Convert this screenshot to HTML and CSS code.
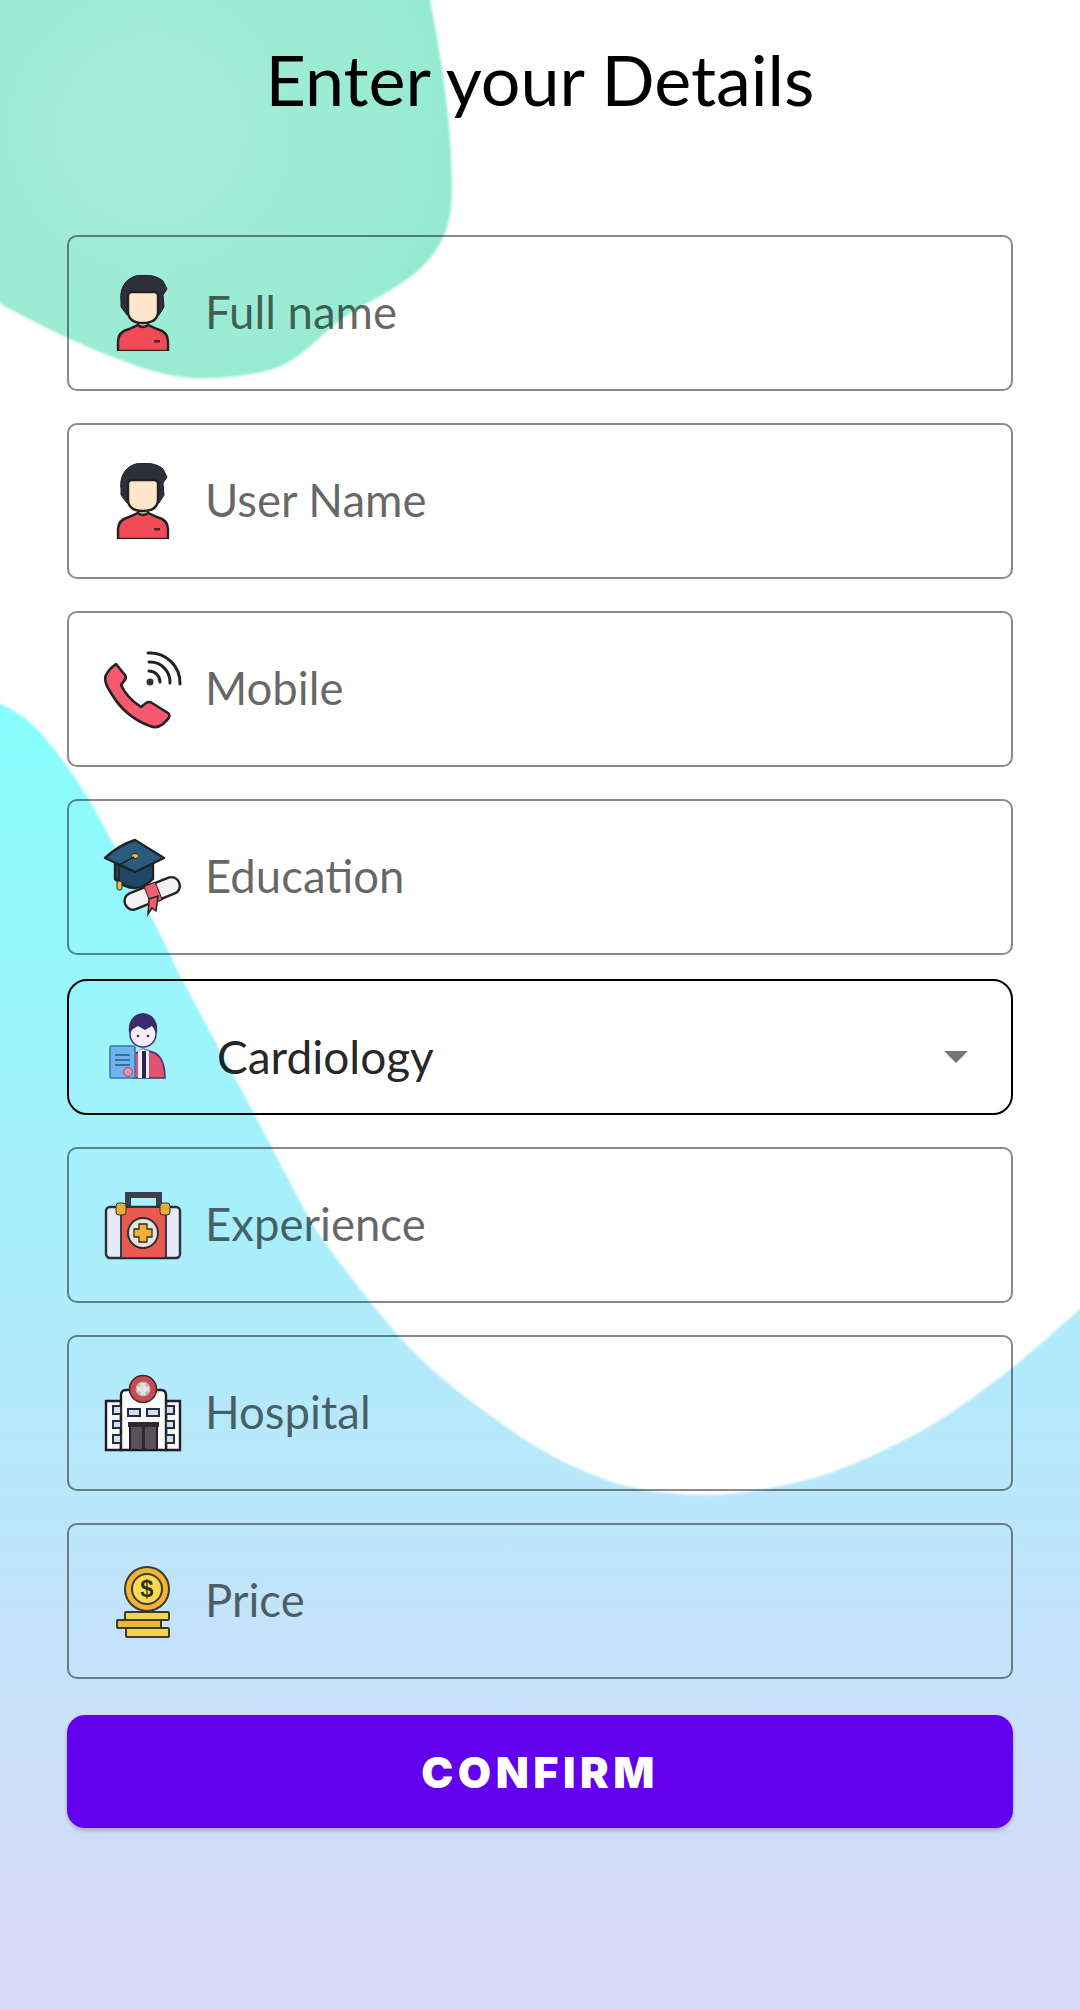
FILE: index.html
```html
<!DOCTYPE html>
<html lang="en">
<head>
<meta charset="utf-8">
<title>Enter your Details</title>
<link rel="stylesheet" href="styles.css">
</head>
<body>
<div class="page">
  <svg class="backdrop" viewBox="0 0 1080 2010" aria-hidden="true">
    <defs>
      <linearGradient id="sky" x1="0" y1="0" x2="0" y2="1">
        <stop offset="0.33" stop-color="#84ffff"/>
        <stop offset="1" stop-color="#dcd8f8"/>
      </linearGradient>
      <radialGradient id="mint" gradientUnits="userSpaceOnUse" cx="150" cy="130" r="300">
        <stop offset="0" stop-color="#a9edd9"/>
        <stop offset="1" stop-color="#95ebd1"/>
      </radialGradient>
      <filter id="soft"><feGaussianBlur stdDeviation="1.2"/></filter>
    </defs>
    <rect width="1080" height="2010" fill="url(#sky)"/>
    <path filter="url(#soft)" fill="#fff" d="M-5 -5H1085V1305C1056 1330 1030 1355 999 1378C965 1404 932 1427 897 1444C862 1461 830 1475 794 1483C760 1491 730 1496 698 1495C668 1494 642 1491 615 1483C580 1471 545 1455 512 1431C475 1405 440 1380 407 1345C375 1310 346 1272 316 1230C290 1185 266 1135 241 1089C218 1048 200 1012 179 974C160 932 145 905 128 871C110 838 95 808 77 781C65 762 52 746 38 730C26 718 12 708 -5 702Z"/>
    <path filter="url(#soft)" fill="url(#mint)" d="M-5 -5H429C440 50 452 120 452 190C452 215 447 235 436 250C420 275 392 290 360 307C335 320 315 345 295 358C280 368 265 372 250 374C230 378 210 379 192 378C160 376 130 364 100 352C65 338 30 320 -5 301Z"/>
  </svg>

  <main class="form">
    <h1 class="title">Enter your Details</h1>

    <div class="field">
      <svg class="icon" viewBox="0 0 76 76"><use href="#person"/></svg>
      <span class="hint">Full name</span>
    </div>
    <div class="field">
      <svg class="icon" viewBox="0 0 76 76"><use href="#person"/></svg>
      <span class="hint">User Name</span>
    </div>
    <div class="field">
      <svg class="icon" viewBox="0 0 76 76">
        <path fill="#f5586f" stroke="#222" stroke-width="2.6" stroke-linejoin="round" d="M11 13L20 24Q22 27 19 30L16 34Q22 47 36 56L41 52Q44 50 47 52L63 62Q66 64 63 68L58 73Q52 78 45 75Q20 66 6 42Q-2 30 1 24Q4 18 11 13Z"/>
        <g fill="none" stroke="#222" stroke-width="3" stroke-linecap="round">
          <path d="M44 20A11 11 0 0 1 55 31"/>
          <path d="M44 11A20 20 0 0 1 65 32"/>
          <path d="M43 2A30 30 0 0 1 75 33"/>
        </g>
        <circle cx="45" cy="31" r="3.500" fill="#333"/>
      </svg>
      <span class="hint">Mobile</span>
    </div>
    <div class="field">
      <svg class="icon" viewBox="0 0 76 76">
        <g transform="rotate(-22 47 54)">
          <rect x="18" y="46" width="58" height="17" rx="8" fill="#f4f1f3" stroke="#222" stroke-width="2.4"/>
          <rect x="42" y="45" width="12" height="19" fill="#ee5d70" stroke="#222" stroke-width="1"/>
        </g>
        <path fill="#ee5d70" stroke="#222" stroke-width="1.5" d="M44 60L53 57L51 72L47 69L43 75Z"/>
        <path fill="#1f4866" stroke="#222" stroke-width="2.4" d="M10 22V40Q30 58 48 40V22Z"/>
        <path fill="#2a5c80" stroke="#222" stroke-width="2.4" stroke-linejoin="round" d="M30 1L59 19L30 33L0 19Q14 6 30 1Z"/>
        <ellipse cx="30" cy="17" rx="4" ry="2.500" fill="#e7c044" stroke="#222"/>
        <path fill="none" stroke="#222" stroke-width="1.8" d="M29 18L14 26V42"/>
        <rect x="12" y="42" width="5" height="9" rx="2" fill="#e7c044" stroke="#222"/>
      </svg>
      <span class="hint">Education</span>
    </div>

    <div class="field select">
      <svg class="icon" viewBox="0 0 76 76">
        <path fill="#de5470" stroke="#4a2c70" stroke-width="1.5" d="M28 69V46L38 40L50 44Q60 50 60 69Z"/>
        <path fill="#f4f0f4" d="M33 69V42L38 40L44 42V69Z"/>
        <path fill="#2b2350" d="M37 42H41V69H37Z"/>
        <circle cx="38" cy="25" r="13" fill="#f6eef0" stroke="#3f2c78" stroke-width="1.5"/>
        <path fill="#3a2a6e" d="M24 24Q22 6 38 4Q54 6 52 24L47 17L40 21L33 17L28 20Z"/>
        <circle cx="33" cy="27" r="1.300" fill="#3a2a6e"/>
        <circle cx="43" cy="27" r="1.300" fill="#3a2a6e"/>
        <rect x="5" y="37" width="25" height="32" rx="1.500" fill="#6db6ec" stroke="#3f72ad" stroke-width="1.5"/>
        <path fill="none" stroke="#3f6e9e" stroke-width="2" d="M10 46H25M10 51H25M10 56H25"/>
        <circle cx="23" cy="63" r="4.500" fill="#f58da6" stroke="#9f4a72"/>
      </svg>
      <span class="value">Cardiology</span>
      <span class="caret"></span>
    </div>

    <div class="field">
      <svg class="icon" viewBox="0 0 76 76">
        <path fill="none" stroke="#3a3f4a" stroke-width="6" d="M23 22V8H54V22"/>
        <rect x="1" y="20" width="74" height="51" rx="4" fill="#e4ebf7" stroke="#2a2e36" stroke-width="2.4"/>
        <rect x="16" y="20" width="45" height="51" fill="#e95a50" stroke="#2a2e36" stroke-width="1.8"/>
        <rect x="11" y="16" width="10" height="12" rx="3" fill="#e9ac3b" stroke="#2a2e36"/>
        <rect x="55" y="16" width="10" height="12" rx="3" fill="#e9ac3b" stroke="#2a2e36"/>
        <circle cx="38" cy="46" r="15" fill="#e8e4da" stroke="#2a2e36" stroke-width="2"/>
        <path fill="#f3b32d" stroke="#2a2e36" stroke-width="1.3" d="M34 37H42V42H47V50H42V55H34V50H29V42H34Z"/>
      </svg>
      <span class="hint">Experience</span>
    </div>
    <div class="field">
      <svg class="icon" viewBox="0 0 76 76">
        <path fill="#fafafa" stroke="#1e1e24" stroke-width="2.4" d="M1 75V26H16V75ZM61 26H75V75H61Z"/>
        <path fill="#fafafa" stroke="#1e1e24" stroke-width="2.4" d="M16 75V20Q16 15 21 15H56Q61 15 61 20V75Z"/>
        <circle cx="38" cy="14" r="13.500" fill="#c84a52" stroke="#3b2a2e" stroke-width="1.5"/>
        <circle cx="38" cy="14" r="7.500" fill="#b8b4b2"/>
        <path fill="#e4e2df" d="M35.500 8H40.500V11.500H44V16.500H40.500V20H35.500V16.500H32V11.500H35.500Z"/>
        <g fill="#cfe0f6" stroke="#2a2e36" stroke-width="2">
          <rect x="8" y="31" width="8" height="8"/><rect x="8" y="46" width="8" height="7"/><rect x="8" y="60" width="8" height="8"/>
          <rect x="61" y="31" width="8" height="8"/><rect x="61" y="46" width="8" height="7"/><rect x="61" y="60" width="8" height="8"/>
          <rect x="23" y="34" width="12" height="7"/><rect x="42" y="34" width="12" height="7"/>
        </g>
        <rect x="25" y="49" width="27" height="26" fill="#5a5058" stroke="#1e1e24" stroke-width="2"/>
        <path fill="#2c2a30" d="M23 47H54V52H23ZM37 52H40V75H37Z"/>
      </svg>
      <span class="hint">Hospital</span>
    </div>
    <div class="field">
      <svg class="icon" viewBox="0 0 76 76">
        <g stroke="#3a3a2e" stroke-width="2">
          <rect x="20" y="49" width="44" height="8" rx="1" fill="#f2d448"/>
          <rect x="21" y="65" width="43" height="9" rx="1" fill="#f2d448"/>
          <rect x="12" y="57" width="44" height="8" rx="1" fill="#f0b636"/>
          <circle cx="42" cy="26" r="22" fill="#f2b533"/>
          <circle cx="42" cy="26" r="15" fill="#fbdb4d"/>
        </g>
        <text class="dollar" x="42" y="34">$</text>
      </svg>
      <span class="hint">Price</span>
    </div>

    <button class="confirm" type="button">CONFIRM</button>
  </main>

  <svg class="defs" aria-hidden="true">
    <symbol id="person" viewBox="0 0 76 76">
      <path fill="#2f2f3c" stroke="#1e1e28" d="M16 26C14 10 24 0 38 0C46 0 54 2 58 6L62 14L58 20L59 32L54 40H22L16 32Z"/>
      <rect x="33" y="44" width="10" height="9" fill="#eecb9d" stroke="#222"/>
      <path fill="#f04a57" stroke="#222" stroke-width="2.4" d="M13 76V66Q13 57 24 54L33 50Q38 54 43 50L52 54Q63 57 63 66V76Z"/>
      <path fill="#fde6cc" stroke="#222" stroke-width="2.4" d="M23 21Q23 17 27 17H49Q53 17 53 21V36Q53 48 38 48Q23 48 23 36Z"/>
      <rect x="49" y="65" width="6" height="2.500" fill="#5a1c28"/>
    </symbol>
  </svg>
</div>
</body>
</html>
```

FILE: styles.css
```css
* {
  box-sizing: border-box;
}

html,
body {
  margin: 0;
  padding: 0;
}

.page {
  position: relative;
  width: 1080px;
  height: 2010px;
  overflow: hidden;
  font-family: "Lato", "Noto Sans", sans-serif;
}

.backdrop {
  position: absolute;
  inset: 0;
  width: 1080px;
  height: 2010px;
}

.defs {
  position: absolute;
  width: 0;
  height: 0;
}

.form {
  position: relative;
  display: flex;
  flex-direction: column;
  padding: 0 67px;
}

.title {
  margin: 38px 0 115px;
  height: 82px;
  font-size: 70px;
  line-height: 82px;
  font-weight: 400;
  text-align: center;
  color: #000;
}

.field {
  display: flex;
  align-items: center;
  height: 155.500px;
  margin-bottom: 32.500px;
  padding-left: 36px;
  border: 2px solid rgba(0, 0, 0, 0.46);
  border-radius: 10px;
}

.icon {
  flex: none;
  width: 76px;
  height: 76px;
  overflow: visible;
  filter: blur(0.5px);
}

.hint {
  margin: 0 0 3px 24px;
  font-size: 45.500px;
  color: rgba(0, 0, 0, 0.6);
}

.select {
  height: 135.500px;
  margin-top: -8px;
  border-color: #000;
  border-radius: 20px;
}

.value {
  margin: 20px 0 0 36px;
  font-size: 46px;
  color: rgba(0, 0, 0, 0.87);
}

.caret {
  margin: 20px 43px 0 auto;
  width: 0;
  height: 0;
  border-style: solid;
  border-width: 12px 12px 0;
  border-color: #757575 transparent transparent;
}

.dollar {
  font-family: "Liberation Sans", sans-serif;
  font-size: 24px;
  font-weight: 700;
  text-anchor: middle;
  fill: #2e2e22;
}

.confirm {
  height: 113px;
  margin-top: 4px;
  border: 0;
  border-radius: 18px;
  background: #6200ee;
  box-shadow: 0 3px 4px rgba(0, 0, 0, 0.2);
  color: #fff;
  font-family: "Inter", sans-serif;
  font-size: 43px;
  font-weight: 900;
  letter-spacing: 4.500px;
}
```
